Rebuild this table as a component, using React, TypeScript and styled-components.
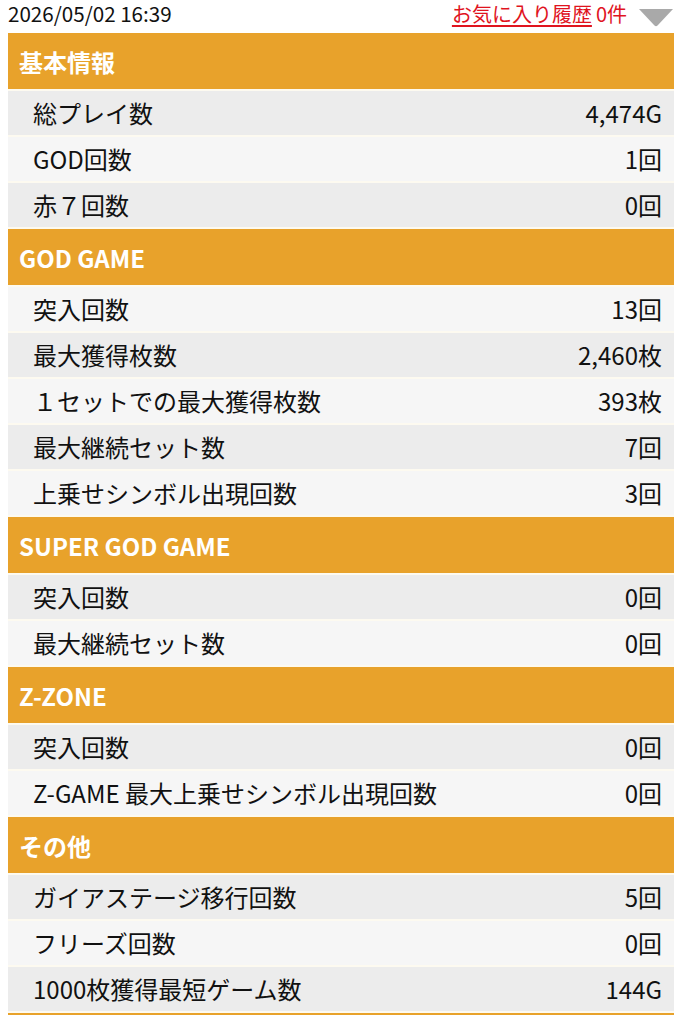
import React from "react";
import styled, { createGlobalStyle } from "styled-components";

const Global = createGlobalStyle`
  html, body { margin: 0; padding: 0; background: #ffffff; }
  body { font-family: "Noto Sans CJK JP", "Noto Sans", sans-serif; color: #111; overflow-x: hidden; }
  *, *::before, *::after { box-sizing: border-box; }
`;

const Page = styled.div`
  padding-left: 8px;
`;

const TopBar = styled.div`
  height: 33px;
  display: flex;
  align-items: center;
  justify-content: space-between;
`;

const DateText = styled.span`
  font-size: 20.6px;
  line-height: 1;
  color: #111;
  margin-top: -6px;
`;

const TopRight = styled.div`
  display: flex;
  align-items: center;
  gap: 11px;
  margin-top: -4px;
`;

const FavLink = styled.a`
  font-size: 20px;
  color: #e0141e;
  text-decoration: underline;
  text-underline-offset: 3px;
  line-height: 1;
`;

const Count = styled.span`
  font-size: 20px;
  color: #e0141e;
  margin-left: 4px;
  line-height: 1;
`;

const Triangle = styled.svg`
  width: 36px;
  height: 20px;
  display: block;
  margin-top: 4px;
`;

const Table = styled.div`
  display: flex;
  flex-direction: column;
  gap: 2px;
  background: #fdfaf0;
`;

const Header = styled.div`
  height: 56px;
  background: #e8a22b;
  color: #fff;
  font-weight: 700;
  font-size: 24px;
  display: flex;
  align-items: center;
  padding-left: 11px;
`;

const Row = styled.div<{ $alt: boolean }>`
  height: 44px;
  background: ${(p) => (p.$alt ? "#f6f6f6" : "#ececec")};
  display: flex;
  align-items: center;
  justify-content: space-between;
  padding: 0 12px 1px 25px;
  font-size: 24px;
  color: #111;
`;

const Label = styled.span``;
const Value = styled.span``;

type Section = { title: string; rows: [string, string][] };

const sections: Section[] = [
  {
    title: "基本情報",
    rows: [
      ["総プレイ数", "4,474G"],
      ["GOD回数", "1回"],
      ["赤７回数", "0回"],
    ],
  },
  {
    title: "GOD GAME",
    rows: [
      ["突入回数", "13回"],
      ["最大獲得枚数", "2,460枚"],
      ["１セットでの最大獲得枚数", "393枚"],
      ["最大継続セット数", "7回"],
      ["上乗せシンボル出現回数", "3回"],
    ],
  },
  {
    title: "SUPER GOD GAME",
    rows: [
      ["突入回数", "0回"],
      ["最大継続セット数", "0回"],
    ],
  },
  {
    title: "Z-ZONE",
    rows: [
      ["突入回数", "0回"],
      ["Z-GAME 最大上乗せシンボル出現回数", "0回"],
    ],
  },
  {
    title: "その他",
    rows: [
      ["ガイアステージ移行回数", "5回"],
      ["フリーズ回数", "0回"],
      ["1000枚獲得最短ゲーム数", "144G"],
    ],
  },
];

export default function App() {
  let idx = 0;
  return (
    <Page>
      <Global />
      <TopBar>
        <DateText>2026/05/02 16:39</DateText>
        <TopRight>
          <div>
            <FavLink href="#">お気に入り履歴</FavLink>
            <Count>0件</Count>
          </div>
          <Triangle viewBox="0 0 36 20">
            <path d="M1 2 L35 2 L19.5 18.5 Q18 20 16.5 18.5 Z" fill="#a9a9a9" />
          </Triangle>
        </TopRight>
      </TopBar>
      <Table>
        {sections.map((s) => (
          <React.Fragment key={s.title}>
            <Header>{s.title}</Header>
            {s.rows.map(([l, v]) => {
              const alt = idx % 2 === 1;
              idx++;
              return (
                <Row key={l} $alt={alt}>
                  <Label>{l}</Label>
                  <Value>{v}</Value>
                </Row>
              );
            })}
          </React.Fragment>
        ))}
        <Header />
      </Table>
    </Page>
  );
}
